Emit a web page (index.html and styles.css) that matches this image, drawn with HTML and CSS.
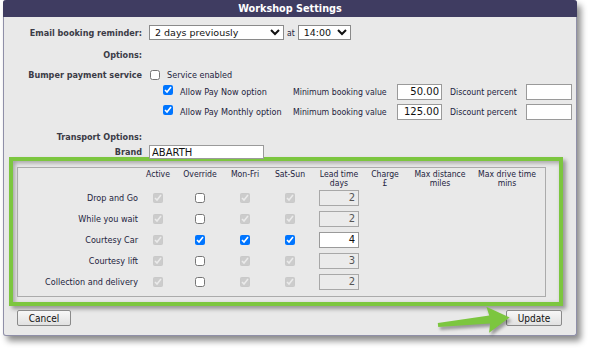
FILE: index.html
```html
<!DOCTYPE html>
<html lang="en">
<head>
    <meta charset="UTF-8">
    <title>Workshop Settings</title>
    <link rel="stylesheet" href="styles.css">
</head>
<body>
    <div class="page">
        <div class="panel">
            <div class="title-bar">Workshop Settings</div>

            <div class="row row-email">
                <span class="lbl">Email booking reminder:</span>
                <div class="field">
                    <select class="sel-days"><option>2 days previously</option></select>
                    <span class="at">at</span>
                    <select class="sel-time"><option>14:00</option></select>
                </div>
            </div>

            <div class="row row-options">
                <span class="lbl">Options:</span>
            </div>

            <div class="row row-bumper">
                <span class="lbl">Bumper payment service</span>
                <label class="field check"><input type="checkbox"> Service enabled</label>
            </div>

            <div class="pay-row pay-now">
                <label class="check"><input type="checkbox" checked> Allow Pay Now option</label>
                <span class="small">Minimum booking value</span>
                <input type="text" class="money" value="50.00">
                <span class="small">Discount percent</span>
                <input type="text" class="percent" value="">
            </div>

            <div class="pay-row pay-monthly">
                <label class="check"><input type="checkbox" checked> Allow Pay Monthly option</label>
                <span class="small">Minimum booking value</span>
                <input type="text" class="money" value="125.00">
                <span class="small">Discount percent</span>
                <input type="text" class="percent" value="">
            </div>

            <div class="row row-transport">
                <span class="lbl">Transport Options:</span>
            </div>

            <div class="row row-brand">
                <span class="lbl">Brand</span>
                <div class="field"><input type="text" class="brand" value="ABARTH"></div>
            </div>

            <div class="highlight">
                <div class="transport">
                    <div class="t-grid t-head">
                        <span></span>
                        <span>Active</span>
                        <span>Override</span>
                        <span>Mon-Fri</span>
                        <span>Sat-Sun</span>
                        <span>Lead time<br>days</span>
                        <span>Charge<br>£</span>
                        <span>Max distance<br>miles</span>
                        <span>Max drive time<br>mins</span>
                    </div>

                    <div class="t-grid t-row">
                        <span class="t-lbl">Drop and Go</span>
                        <span><input type="checkbox" checked disabled></span>
                        <span><input type="checkbox"></span>
                        <span><input type="checkbox" checked disabled></span>
                        <span><input type="checkbox" checked disabled></span>
                        <span><input type="text" class="lead" value="2" disabled></span>
                    </div>
                    <div class="t-grid t-row">
                        <span class="t-lbl">While you wait</span>
                        <span><input type="checkbox" checked disabled></span>
                        <span><input type="checkbox"></span>
                        <span><input type="checkbox" checked disabled></span>
                        <span><input type="checkbox" checked disabled></span>
                        <span><input type="text" class="lead" value="2" disabled></span>
                    </div>
                    <div class="t-grid t-row">
                        <span class="t-lbl">Courtesy Car</span>
                        <span><input type="checkbox" checked disabled></span>
                        <span><input type="checkbox" checked></span>
                        <span><input type="checkbox" checked></span>
                        <span><input type="checkbox" checked></span>
                        <span><input type="text" class="lead" value="4"></span>
                    </div>
                    <div class="t-grid t-row">
                        <span class="t-lbl">Courtesy lift</span>
                        <span><input type="checkbox" checked disabled></span>
                        <span><input type="checkbox"></span>
                        <span><input type="checkbox" checked disabled></span>
                        <span><input type="checkbox" checked disabled></span>
                        <span><input type="text" class="lead" value="3" disabled></span>
                    </div>
                    <div class="t-grid t-row">
                        <span class="t-lbl">Collection and delivery</span>
                        <span><input type="checkbox" checked disabled></span>
                        <span><input type="checkbox"></span>
                        <span><input type="checkbox" checked disabled></span>
                        <span><input type="checkbox" checked disabled></span>
                        <span><input type="text" class="lead" value="2" disabled></span>
                    </div>
                </div>
            </div>

            <div class="footer">
                <button class="btn">Cancel</button>
                <button class="btn">Update</button>
            </div>
        </div>

        <!-- annotation arrow pointing at Update -->
        <svg class="arrow" width="90" height="45" viewBox="0 0 90 45">
            <defs>
                <filter id="blur"><feGaussianBlur stdDeviation="1.5"/></filter>
            </defs>
            <g transform="translate(10,28) rotate(-6)" filter="url(#blur)">
                <polygon points="0,-2 52,-4 50,-13 72,0 50,13 52,4 0,2" fill="rgba(0,0,0,0.35)"/>
            </g>
            <g transform="translate(8,25) rotate(-6)">
                <polygon points="0,-2 52,-4 50,-13 72,0 50,13 52,4 0,2" fill="#7cc63f"/>
            </g>
        </svg>
    </div>
</body>
</html>
```

FILE: styles.css
```css
body {
    margin: 0;
    background-color: #fff;
    font-family: "DejaVu Sans Condensed", "DejaVu Sans", sans-serif;
    font-size: 9px;
    color: #23233d;
    overflow: hidden;
}

.page {
    position: relative;
    width: 595px;
    height: 358px;
}

.panel {
    margin-left: 3px;
    width: 572px;
    height: 335px;
    background-color: #e9e9e9;
    border: 1px solid #8f8fa8;
    border-top: 0;
    border-radius: 3px 3px 3px 3px;
    box-shadow: 4px 5px 6px rgba(0, 0, 0, 0.45);
}

.title-bar {
    margin: 0 -1px;
    height: 17px;
    line-height: 17px;
    background-color: #3f3c61;
    color: #fff;
    text-align: center;
    font-family: "DejaVu Sans", sans-serif;
    font-weight: bold;
    font-size: 9.7px;
    border-radius: 3px 3px 0 0;
}

.row {
    display: grid;
    grid-template-columns: 138px 1fr;
    column-gap: 7px;
    align-items: center;
    height: 14px;
}

.lbl {
    text-align: right;
    font-weight: bold;
    color: #3b3b46;
}

.field {
    display: flex;
    align-items: center;
}

.row-email {
    margin-top: 8px;
    height: 15px;
}

.row-options {
    margin-top: 8px;
}

.row-bumper {
    margin-top: 6px;
}

.row-transport {
    margin-top: 10px;
}

.row-brand {
    margin-top: 1px;
    height: 13px;
}

select {
    font-family: "DejaVu Sans", sans-serif;
    font-size: 9.5px;
    color: #111;
    height: 15px;
    padding: 0 0 0 1px;
    border: 1px solid #8a8a8a;
    border-radius: 0;
    background-color: #fff;
}

.sel-days {
    width: 135px;
}

.sel-time {
    width: 53px;
}

.at {
    margin: 0 3px 0 3px;
    font-size: 8.5px;
}

.check {
    display: flex;
    align-items: center;
    gap: 7px;
}

input[type=checkbox] {
    width: 10px;
    height: 10px;
    margin: 0;
}

.row-bumper .check {
    padding-left: 1px;
}

.pay-row {
    display: grid;
    grid-template-columns: 130px 104px 53px 76px 46px;
    align-items: center;
    padding-left: 159px;
    height: 17px;
}

.pay-now {
    margin-top: 1px;
}

.pay-monthly {
    margin-top: 3px;
}

.pay-row .check input {
    margin-top: -4px;
}

.small {
    font-size: 8.7px;
}

input[type=text] {
    box-sizing: border-box;
    font-family: "DejaVu Sans", sans-serif;
    font-size: 10px;
    color: #111;
    border: 1px solid #9a9a9a;
    background-color: #fff;
    margin: 0;
}

.money {
    width: 45px;
    height: 16px;
    text-align: right;
    padding: 0 2px;
}

.percent {
    width: 46px;
    height: 16px;
}

.brand {
    width: 115px;
    height: 14px;
    padding: 0 2px;
    margin-top: 1px;
}

.highlight {
    margin: -1px 13px 0 5px;
    border: 4px solid #7cc63f;
    padding: 6px 13px 5px 4px;
    box-shadow: 3px 3px 4px rgba(0, 0, 0, 0.35), inset 2px 2px 4px rgba(0, 0, 0, 0.3);
}

.transport {
    border: 1px solid #ababab;
    padding: 2px 0 4px 0;
}

.t-grid {
    display: grid;
    grid-template-columns: 127px 26px 58px 32px 58px 40px 52px 58px 1fr;
    align-items: center;
    justify-items: center;
}

.t-head {
    height: 17px;
    line-height: 8.5px;
    text-align: center;
    font-size: 8.6px;
    align-items: start;
}

.t-row {
    height: 21px;
}

.t-row span {
    display: flex;
}

.t-lbl {
    justify-self: end;
    padding-right: 7px;
}

.lead {
    width: 40px;
    height: 16px;
    text-align: right;
    padding: 0 3px;
}

.lead:disabled {
    background-color: #ebebeb;
    color: #555;
    border-color: #a8a8a8;
}

.footer {
    display: flex;
    justify-content: space-between;
    padding: 0 14px 0 13px;
    margin-top: 4px;
}

.btn {
    height: 16px;
    padding: 0;
    font-family: "DejaVu Sans Condensed", "DejaVu Sans", sans-serif;
    font-size: 10px;
    color: #111;
    background: linear-gradient(#f7f7f7, #e1e1e1);
    border: 1px solid #8a8a8a;
    border-radius: 2px;
}

.btn:first-child {
    width: 54px;
}

.btn:last-child {
    width: 56px;
}

.arrow {
    position: absolute;
    left: 430px;
    top: 300px;
}
```
